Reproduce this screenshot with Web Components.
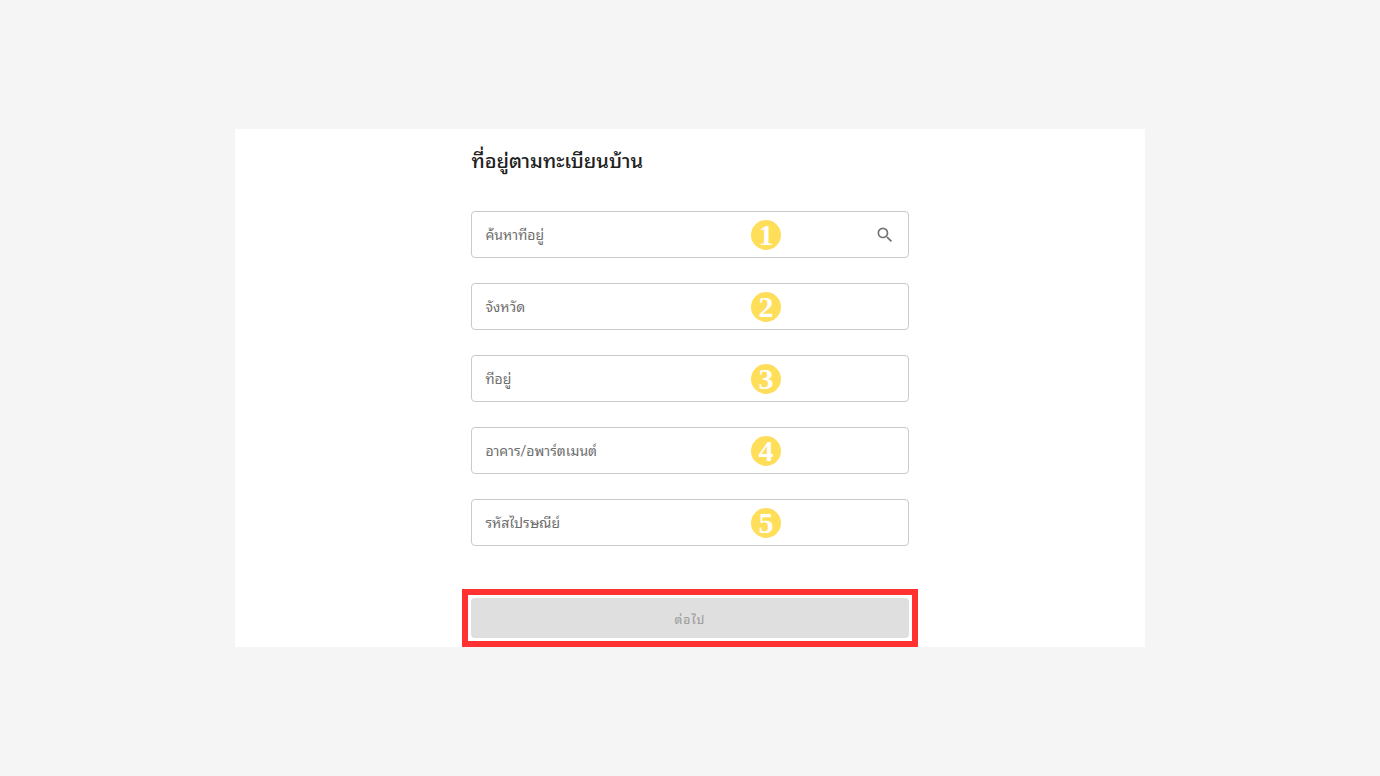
<!DOCTYPE html>
<html lang="th">
<head>
<meta charset="utf-8">
<meta name="viewport" content="width=device-width, initial-scale=1">
<title>ที่อยู่ตามทะเบียนบ้าน</title>
<style>
  body { margin: 0; background: #f5f5f5; color: #212121; font-family: Roboto, "Noto Sans Thai Looped", "Noto Looped Thai", Loma, Garuda, Waree, Umpush, Laksaman, Sarabun, FreeSans, FreeSerif, "Noto Serif Thai", sans-serif; }
</style>
</head>
<body>
<address-page>
  <address-form heading="ที่อยู่ตามทะเบียนบ้าน">
    <text-field label="ค้นหาที่อยู่" name="search"><step-badge slot="badge">1</step-badge><search-icon slot="icon"></search-icon></text-field>
    <text-field label="จังหวัด" name="province"><step-badge slot="badge">2</step-badge></text-field>
    <text-field label="ที่อยู่" name="address"><step-badge slot="badge">3</step-badge></text-field>
    <text-field label="อาคาร/อพาร์ตเมนต์" name="building"><step-badge slot="badge">4</step-badge></text-field>
    <text-field label="รหัสไปรษณีย์" name="postcode"><step-badge slot="badge">5</step-badge></text-field>
    <next-button slot="action">ต่อไป</next-button>
  </address-form>
</address-page>
<script>
  const define = (name, html, setup) => customElements.define(name, class extends HTMLElement {
    connectedCallback() {
      if (this.shadowRoot) return;
      const root = this.attachShadow({ mode: "open" });
      root.innerHTML = html;
      if (setup) setup(this, root);
    }
  });

  define("address-page", `
    <style>
      :host { display: grid; place-items: center; min-height: 100vh; }
      main { width: 66%; min-width: 320px; background: #fff; }
    </style>
    <main><slot></slot></main>`);

  define("address-form", `
    <style>
      :host { display: block; }
      form { width: 48%; min-width: 300px; margin: 0 auto; padding-top: 16px; }
      h1 { margin: 0 0 34px; font-size: 20px; line-height: 32px; font-weight: 500; }
      .fields { display: grid; gap: 25px; }
      .action { margin: 43px -9px 0; }
    </style>
    <form>
      <h1></h1>
      <div class="fields"><slot></slot></div>
      <div class="action"><slot name="action"></slot></div>
    </form>`, (host, root) => {
      root.querySelector("h1").textContent = host.getAttribute("heading");
    });

  define("text-field", `
    <style>
      :host { display: block; }
      .box { display: grid; grid-template-columns: 64% 1fr; align-items: center; height: 47px; box-sizing: border-box; border: 1px solid #cacaca; border-radius: 4px; }
      input { grid-area: 1 / 1 / 2 / 3; width: 100%; height: 100%; box-sizing: border-box; padding: 0 13px; border: 0; outline: 0; background: none; font: inherit; font-size: 14px; }
      label { grid-area: 1 / 1; padding-left: 13px; font-size: 14px; line-height: 20px; color: #6e6e6e; clip-path: inset(3px 0 -4px 0); pointer-events: none; }
      .end { grid-area: 1 / 2; display: flex; align-items: center; justify-content: space-between; padding-right: 13px; pointer-events: none; }
      input:not(:placeholder-shown) + label { visibility: hidden; }
    </style>
    <div class="box">
      <input id="field" type="text" placeholder=" ">
      <label for="field"></label>
      <div class="end"><slot name="badge"></slot><slot name="icon"></slot></div>
    </div>`, (host, root) => {
      root.querySelector("label").textContent = host.getAttribute("label");
      root.querySelector("input").name = host.getAttribute("name");
    });

  define("step-badge", `
    <style>
      :host { display: flex; align-items: center; justify-content: center; width: 30px; height: 30px; border-radius: 50%; background: #ffde59; color: #fff; font-family: "Liberation Serif", serif; font-size: 30px; font-weight: 700; line-height: 30px; }
    </style>
    <slot></slot>`);

  define("search-icon", `
    <style>:host, svg { display: block; width: 20px; height: 20px; }</style>
    <svg viewBox="0 0 24 24" fill="#757575" aria-hidden="true"><path d="M15.5 14h-.79l-.28-.27A6.471 6.471 0 0 0 16 9.5 6.5 6.5 0 1 0 9.5 16c1.61 0 3.09-.59 4.23-1.57l.27.28v.79l5 4.99L20.49 19l-4.99-5zm-6 0C7.01 14 5 11.99 5 9.5S7.01 5 9.5 5 14 7.01 14 9.5 11.99 14 9.5 14z"/></svg>`);

  define("next-button", `
    <style>
      :host { display: block; border: 6px solid #ff3131; padding: 3px; }
      button { display: block; width: 100%; height: 40px; padding: 0; border: 0; border-radius: 4px; background: #dfdfdf; color: #a0a0a0; font: inherit; font-size: 12px; font-weight: 500; letter-spacing: 1px; }
    </style>
    <button type="button" disabled><slot></slot></button>`);
</script>
</body>
</html>
